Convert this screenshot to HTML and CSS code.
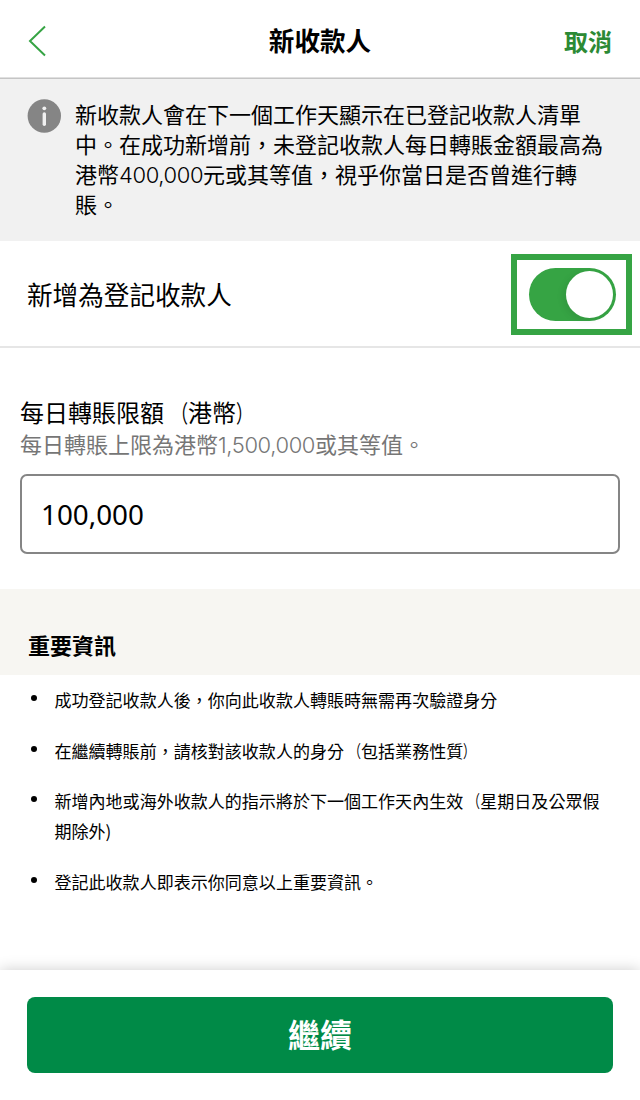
FILE: index.html
```html
<!DOCTYPE html>
<html lang="zh-Hant">
<head>
    <meta charset="UTF-8">
    <meta name="viewport" content="width=device-width, initial-scale=1.0">
    <title>新收款人</title>
    <link rel="stylesheet" href="styles.css">
</head>
<body>
    <header class="topbar">
        <button class="back" aria-label="返回">
            <svg width="18" height="32" viewBox="0 0 18 32">
                <path d="M17 1.5 L2 16 L17 30.5" fill="none" stroke="#36a444" stroke-width="2"/>
            </svg>
        </button>
        <h1>新收款人</h1>
        <button class="cancel">取消</button>
    </header>

    <main>
        <div class="notice">
            <svg class="info-icon" width="34" height="34" viewBox="0 0 34 34">
                <circle cx="17.3" cy="17" r="16.7" fill="#858585"/>
                <circle cx="17.3" cy="9.3" r="1.9" fill="#f1f1f1"/>
                <path d="M17.3 15 V25.2" stroke="#f1f1f1" stroke-width="3.4" stroke-linecap="round"/>
            </svg>
            <p>新收款人會在下一個工作天顯示在已登記收款人清單<br>中。在成功新增前，未登記收款人每日轉賬金額最高為<br>港幣<span class="num">400,000</span>元或其等值，視乎你當日是否曾進行轉<br>賬。</p>
        </div>

        <div class="register-row">
            <span class="register-label">新增為登記收款人</span>
            <div class="highlight">
                <button class="toggle" role="switch" aria-checked="true" aria-label="新增為登記收款人">
                    <span class="knob"></span>
                </button>
            </div>
        </div>

        <div class="limit">
            <label for="limit">每日轉賬限額<span class="paren open" lang="ja">（</span>港幣<span class="paren close" lang="ja">）</span></label>
            <p class="hint">每日轉賬上限為港幣<span class="num">1,500,000</span>或其等值。</p>
            <input id="limit" type="text" value="100,000">
        </div>

        <h2 class="info-title">重要資訊</h2>
        <ul class="info-list">
            <li>成功登記收款人後，你向此收款人轉賬時無需再次驗證身分</li>
            <li>在繼續轉賬前，請核對該收款人的身分<span class="paren open" lang="ja">（</span>包括業務性質<span class="paren close" lang="ja">）</span></li>
            <li>新增內地或海外收款人的指示將於下一個工作天內生效<span class="paren open" lang="ja">（</span>星期日及公眾假<br>期除外)</li>
            <li>登記此收款人即表示你同意以上重要資訊。</li>
        </ul>
    </main>

    <footer class="footer">
        <button class="continue">繼續</button>
    </footer>
</body>
</html>
```
FILE: styles.css
```css
* {
    box-sizing: border-box;
}
body {
    font-family: "Noto Sans CJK TC", sans-serif;
    margin: 0;
    height: 1100px;
    display: flex;
    flex-direction: column;
    background: white;
    color: #000;
    overflow: hidden;
}
h1, h2, p, ul {
    margin: 0;
    padding: 0;
}
button {
    font-family: inherit;
    border: none;
    background: none;
    padding: 0;
    cursor: pointer;
}
main {
    flex: 1;
}
.topbar {
    height: 79px;
    display: grid;
    grid-template-columns: 1fr auto 1fr;
    align-items: center;
    padding: 3px 28px 0 28px;
    border-bottom: 1px solid #c5c5c5;
    box-shadow: inset 0 -1px 0 #e0e0e0;
}
.back {
    justify-self: start;
    display: flex;
}
.topbar h1 {
    font-size: 25.6px;
    font-weight: bold;
    line-height: 38px;
    padding-bottom: 2px;
}
.cancel {
    justify-self: end;
    color: #2c8a35;
    font-size: 24px;
    font-weight: bold;
    line-height: 36px;
}
.notice {
    height: 162px;
    display: flex;
    gap: 14px;
    padding: 20px 20px 0 27px;
    background: #f1f1f1;
}
.notice p {
    margin-top: -1px;
    font-size: 22px;
    line-height: 30px;
    white-space: nowrap;
}
.info-icon {
    flex: none;
}
.num {
    font-family: Inter, sans-serif;
    font-weight: 350;
    letter-spacing: -0.4px;
    line-height: 1;
}
/* narrow brackets that hug the text inside them */
.paren {
    display: inline-block;
    line-height: 1;
    font-family: "Noto Sans CJK JP", sans-serif;
}
.open {
    transform: scaleX(0.7);
    transform-origin: right;
}
.close {
    transform: scaleX(0.7);
    transform-origin: left;
}
.register-row {
    height: 107px;
    display: flex;
    justify-content: space-between;
    align-items: center;
    padding: 0 8px 0 27px;
    border-bottom: 2px solid #e6e6e6;
}
.register-label {
    font-size: 25.6px;
}
.highlight {
    width: 121px;
    height: 81px;
    display: flex;
    justify-content: center;
    align-items: center;
    margin-top: 2px;
    border: 6px solid #36a444;
}
.toggle {
    width: 87px;
    height: 53px;
    display: flex;
    justify-content: flex-end;
    align-items: center;
    margin-left: 2px;
    padding-right: 3px;
    border-radius: 27px;
    background: #36a444;
}
.knob {
    width: 47px;
    height: 47px;
    border-radius: 50%;
    background: white;
    box-shadow: -3px 2px 7px rgba(0, 0, 0, 0.08);
}
.limit {
    height: 241px;
    padding: 47px 20px 0;
}
.limit label {
    display: block;
    height: 34px;
    font-size: 24px;
    line-height: 34px;
}
.hint {
    margin-top: -1px;
    color: #767676;
    font-size: 22px;
    line-height: 30px;
}
.limit input {
    display: block;
    width: 100%;
    height: 80px;
    margin-top: 16px;
    padding: 0 19px;
    border: 2px solid #858585;
    border-radius: 7px;
    font-family: "Noto Sans", sans-serif;
    font-size: 27.8px;
    color: #000;
}
.info-title {
    height: 86px;
    padding: 39px 28px 0;
    background: #f7f6f2;
    font-size: 22px;
    line-height: 32px;
}
.info-list {
    display: flex;
    flex-direction: column;
    gap: 20.7px;
    padding: 10px 0 0 54.5px;
    list-style: none;
    font-size: 17.05px;
    line-height: 30px;
    white-space: nowrap;
}
.info-list li {
    position: relative;
}
.info-list li::before {
    content: "";
    position: absolute;
    left: -23.5px;
    top: 10px;
    width: 6px;
    height: 6px;
    border-radius: 50%;
    background: #000;
}
.footer {
    height: 130px;
    padding: 27px 27px 0;
    background: white;
    box-shadow: 0 0 14px rgba(0, 0, 0, 0.2);
}
.continue {
    display: block;
    width: 100%;
    height: 76px;
    padding-bottom: 4px;
    border-radius: 8px;
    background: #008a47;
    color: white;
    font-size: 32px;
    font-weight: bold;
}
```
